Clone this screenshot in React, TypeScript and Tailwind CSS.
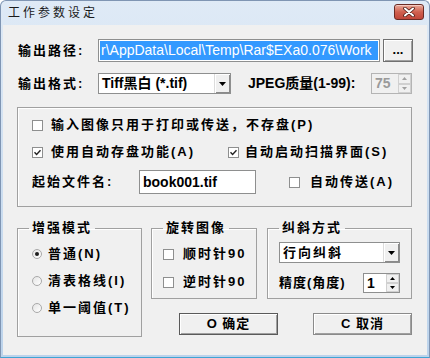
import React from "react";

const font = "font-['Liberation_Sans','Noto_Sans_CJK_SC',sans-serif]";

function Check({ checked }: { checked?: boolean }) {
  return (
    <span className="w-[11px] h-[11px] border border-[#8e8f8f] bg-white flex items-center justify-center shrink-0">
      {checked && (
        <svg width="7" height="7" viewBox="0 0 7 7">
          <path d="M0.5 3.2 L2.6 5.4 L6.5 1.2" stroke="#222" strokeWidth="1.4" fill="none" />
        </svg>
      )}
    </span>
  );
}

function Radio({ checked }: { checked?: boolean }) {
  return (
    <span className="w-[10px] h-[10px] rounded-full border border-[#a9a9a9] bg-gradient-to-br from-[#e4e4e4] to-white flex items-center justify-center shrink-0">
      {checked && <span className="w-[4px] h-[4px] rounded-full bg-[#1c1c1c]" />}
    </span>
  );
}

function Arrow() {
  return (
    <svg width="7" height="4" viewBox="0 0 7 4">
      <path d="M0 0 H7 L3.5 4 Z" fill="#000" />
    </svg>
  );
}

function DropButton() {
  return (
    <span className="w-[16px] h-full bg-[#f0f0f0] border-l border-[#dcdcdc] shadow-[inset_1px_1px_0_#ffffff,inset_-1px_-1px_0_#8a8a8a] flex items-center justify-center shrink-0">
      <Arrow />
    </span>
  );
}

function Spinner({ value, disabled, width }: { value: string; disabled?: boolean; width: string }) {
  return (
    <div
      className={`${width} h-full flex border ${
        disabled ? "border-[#b4b4b4] bg-[#f0f0f0] text-[#9a9a9a]" : "border-[#8e8f8f] bg-white text-black"
      }`}
    >
      <span className="flex-1 pl-[3px] flex items-center text-[14px] font-bold">{value}</span>
      <span className="w-[13px] flex flex-col shrink-0">
        <span className="flex-1 bg-[#f0f0f0] border border-[#d0d0d0] flex items-center justify-center">
          <svg width="5" height="3" viewBox="0 0 5 3">
            <path d="M0 3 H5 L2.5 0 Z" fill={disabled ? "#a0a0a0" : "#000"} />
          </svg>
        </span>
        <span className="flex-1 bg-[#f0f0f0] border border-[#d0d0d0] flex items-center justify-center">
          <svg width="5" height="3" viewBox="0 0 5 3">
            <path d="M0 0 H5 L2.5 3 Z" fill={disabled ? "#a0a0a0" : "#000"} />
          </svg>
        </span>
      </span>
    </div>
  );
}

export default function App() {
  return (
    <div
      className={`${font} w-[430px] h-[358px] flex flex-col border border-[#7f95b3] border-b-[#3fa4d4] rounded-t-[6px] bg-gradient-to-b from-[#dfeaf6] to-[#bcd3eb] text-[13px] text-black`}
    >
      {/* title bar */}
      <div className="h-[24px] flex items-start justify-between shrink-0">
        <span className="pl-[7px] pt-[4px] text-[12px] leading-[16px] tracking-[3px] text-[#1a1a1a]">
          工作参数设定
        </span>
        <button className="mt-[3px] mr-[5px] w-[30px] h-[16px] rounded-[3px] border border-[#6a2b24] bg-gradient-to-b from-[#e9a99a] via-[#d0604f] to-[#c0463a] flex items-center justify-center shadow-[inset_0_1px_0_#f4c9bf]">
          <svg width="12" height="10" viewBox="0 0 12 10">
            <path d="M2 1.5 L10 8.5 M10 1.5 L2 8.5" stroke="#4a1a14" strokeWidth="3.6" strokeLinecap="round" />
            <path d="M2 1.5 L10 8.5 M10 1.5 L2 8.5" stroke="#ffffff" strokeWidth="2" strokeLinecap="round" />
          </svg>
        </button>
      </div>

      {/* client area */}
      <div className="flex-1 mx-[2px] mb-[2px] bg-[#f0f0f0] flex flex-col font-bold">
        {/* output path */}
        <div className="mt-[14px] h-[23px] pl-[15px] flex items-center">
          <span className="w-[80px] tracking-[2px]">输出路径:</span>
          <div className="w-[282px] h-full border border-[#8e8f8f] bg-white p-[1px] flex">
            <div className="flex-1 bg-[#3399ff] text-white font-normal text-[14px] flex items-center overflow-hidden whitespace-nowrap pl-[1px]">
              r\AppData\Local\Temp\Rar$EXa0.076\Work
            </div>
          </div>
          <button className="ml-[3px] w-[30px] h-full bg-[#f0f0f0] border border-[#707070] shadow-[inset_1px_1px_0_#ffffff,inset_-1px_-1px_0_#a0a0a0] text-[13px] leading-[10px] pb-[2px]">
            ...
          </button>
        </div>

        {/* output format */}
        <div className="mt-[11px] h-[21px] pl-[15px] flex items-center">
          <span className="w-[80px] tracking-[2px]">输出格式:</span>
          <div className="w-[133px] h-full border border-[#8e8f8f] bg-white flex">
            <span className="flex-1 pl-[3px] flex items-center text-[14px]">Tiff黑白 (*.tif)</span>
            <DropButton />
          </div>
          <span className="ml-[17px] w-[123px] text-[14px]">JPEG质量(1-99):</span>
          <Spinner value="75" disabled width="w-[41px]" />
        </div>

        {/* options group */}
        <div className="mt-[13px] ml-[14px] w-[395px] h-[100px] border border-[#a0a0a0] shadow-[inset_1px_1px_0_#ffffff] pl-[14px] flex flex-col tracking-[2px]">
          <div className="mt-[9px] h-[16px] flex items-center gap-[8px]">
            <Check />
            <span>输入图像只用于打印或传送，不存盘(P)</span>
          </div>
          <div className="mt-[11px] h-[16px] flex items-center">
            <div className="w-[196px] flex items-center gap-[8px]">
              <Check checked />
              <span>使用自动存盘功能(A)</span>
            </div>
            <div className="flex items-center gap-[6px]">
              <Check checked />
              <span>自动启动扫描界面(S)</span>
            </div>
          </div>
          <div className="mt-[10px] h-[24px] flex items-center">
            <span className="w-[107px]">起始文件名:</span>
            <div className="w-[117px] h-full border border-[#8e8f8f] bg-white pl-[3px] flex items-center tracking-normal text-[14px]">
              book001.tif
            </div>
            <div className="ml-[33px] flex items-center gap-[10px]">
              <Check />
              <span>自动传送(A)</span>
            </div>
          </div>
        </div>

        {/* lower groups */}
        <div className="mt-[14px] ml-[14px] flex tracking-[2px]">
          <fieldset className="w-[125px] h-[116px] border border-[#a0a0a0] shadow-[inset_1px_1px_0_#ffffff]">
            <legend className="ml-[11px] px-[3px] leading-[14px]">增强模式</legend>
            <div className="pl-[14px] flex flex-col">
              <div className="mt-[11px] h-[16px] flex items-center gap-[6px]">
                <Radio checked />
                <span>普通(N)</span>
              </div>
              <div className="mt-[11px] h-[16px] flex items-center gap-[6px]">
                <Radio />
                <span>清表格线(I)</span>
              </div>
              <div className="mt-[11px] h-[16px] flex items-center gap-[6px]">
                <Radio />
                <span>单一阈值(T)</span>
              </div>
            </div>
          </fieldset>

          <div className="ml-[9px] flex flex-col">
            <div className="flex gap-[10px]">
              <fieldset className="w-[106px] h-[78px] border border-[#a0a0a0] shadow-[inset_1px_1px_0_#ffffff]">
                <legend className="ml-[11px] px-[3px] leading-[14px]">旋转图像</legend>
                <div className="pl-[11px] flex flex-col">
                  <div className="mt-[11px] h-[16px] flex items-center gap-[9px]">
                    <Check />
                    <span>顺时针90</span>
                  </div>
                  <div className="mt-[12px] h-[16px] flex items-center gap-[9px]">
                    <Check />
                    <span>逆时针90</span>
                  </div>
                </div>
              </fieldset>
              <fieldset className="w-[145px] h-[78px] border border-[#a0a0a0] shadow-[inset_1px_1px_0_#ffffff]">
                <legend className="ml-[11px] px-[3px] leading-[14px]">纠斜方式</legend>
                <div className="pl-[11px] flex flex-col">
                  <div className="mt-[7px] w-[121px] h-[21px] border border-[#8e8f8f] bg-white flex">
                    <span className="flex-1 pl-[3px] flex items-center">行向纠斜</span>
                    <DropButton />
                  </div>
                  <div className="mt-[10px] h-[20px] flex items-center">
                    <span className="w-[84px] tracking-[1px]">精度(角度)</span>
                    <Spinner value="1" width="w-[37px]" />
                  </div>
                </div>
              </fieldset>
            </div>
            <div className="mt-[14px] pl-[28px] flex gap-[35px] tracking-[1px]">
              <button className="w-[99px] h-[22px] bg-[#f0f0f0] border border-[#5a5a5a] shadow-[inset_1px_1px_0_#ffffff,inset_-1px_-1px_0_#a0a0a0] font-bold">
                O 确定
              </button>
              <button className="w-[99px] h-[22px] bg-[#f0f0f0] border border-[#8a8a8a] shadow-[inset_1px_1px_0_#ffffff,inset_-1px_-1px_0_#a0a0a0] font-bold">
                C 取消
              </button>
            </div>
          </div>
        </div>
      </div>
    </div>
  );
}
